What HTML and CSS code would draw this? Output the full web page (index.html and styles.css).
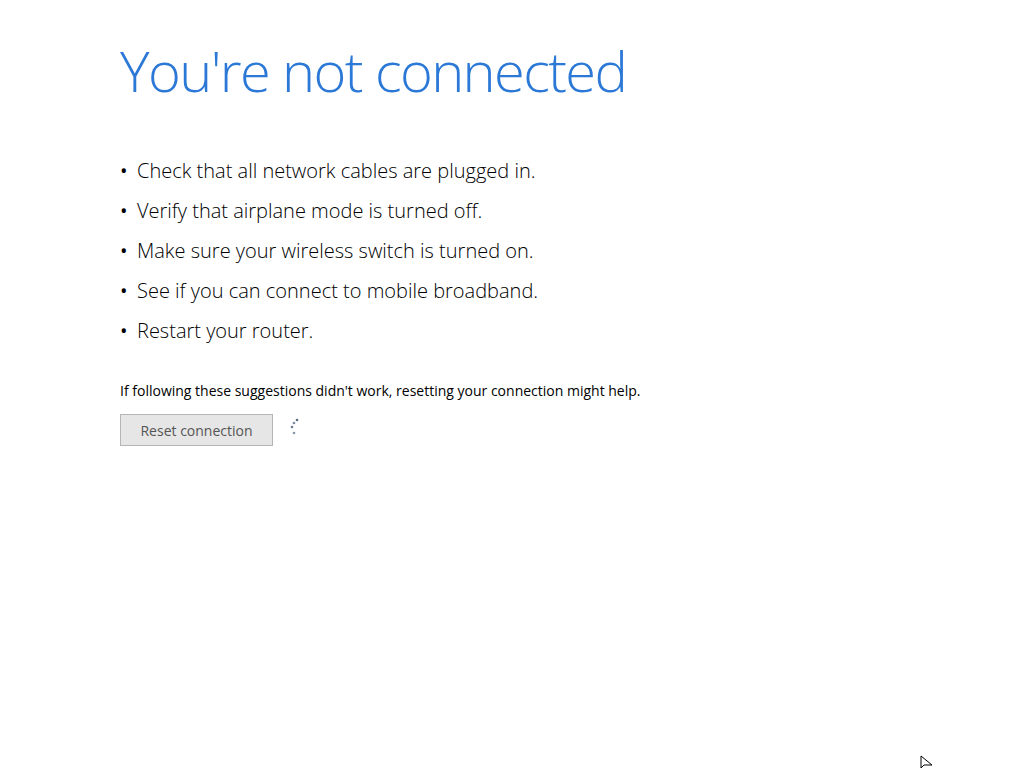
FILE: index.html
```html
<!DOCTYPE html>
<html lang="en">
<head>
  <meta charset="UTF-8">
  <title>You're not connected</title>
  <link rel="stylesheet" href="styles.css">
</head>
<body>

  <div class="page">
    <h1 class="title">You're not connected</h1>

    <ul class="tips">
      <li>Check that all network cables are plugged in.</li>
      <li>Verify that airplane mode is turned off.</li>
      <li>Make sure your wireless switch is turned on.</li>
      <li>See if you can connect to mobile broadband.</li>
      <li>Restart your router.</li>
    </ul>

    <p class="hint">If following these suggestions didn't work, resetting your connection might help.</p>

    <div class="actions">
      <button class="reset-btn">Reset connection</button>
      <svg class="spinner" width="16" height="20" viewBox="0 0 16 20">
        <circle cx="12" cy="3" r="1.3" fill="#5a6a80"/>
        <circle cx="9" cy="6" r="1.3" fill="#7a8aa0"/>
        <circle cx="7" cy="10" r="1.3" fill="#6a7a90"/>
        <circle cx="9" cy="16" r="1.3" fill="#8896aa"/>
      </svg>
    </div>
  </div>

  <svg class="cursor" width="14" height="16" viewBox="0 0 14 16">
    <path d="M1 1 L1 13 L4 10 L12 10 Z" fill="#fff" stroke="#000" stroke-width="1"/>
  </svg>

</body>
</html>
```

FILE: styles.css
```css
body {
  margin: 0;
  background: #fff;
  height: 100vh;
  overflow: hidden;
  font-family: "Open Sans", "Noto Sans", sans-serif;
  position: relative;
}

.page {
  padding: 37px 0 0 120px;
}

.title {
  margin: 0;
  font-size: 56px;
  font-weight: 300;
  color: #2b78d6;
  line-height: 66px;
  letter-spacing: -1.6px;
}

.tips {
  list-style: none;
  margin: 48px 0 0;
  padding: 0;
}

.tips li {
  font-size: 20px;
  font-weight: 300;
  color: #000;
  line-height: 40px;
  position: relative;
  padding-left: 17px;
}

.tips li::before {
  content: "•";
  position: absolute;
  left: 0;
  top: 0;
  font-weight: 400;
}

.hint {
  margin: 30px 0 0;
  font-size: 14px;
  color: #000;
  line-height: 20px;
}

.actions {
  margin-top: 13px;
  display: flex;
  align-items: flex-start;
  gap: 12px;
}

.reset-btn {
  width: 153px;
  height: 32px;
  background: #e6e6e6;
  border: 1px solid #b5b5b5;
  color: #555;
  font-family: inherit;
  font-size: 14px;
  padding: 0;
}

.spinner {
  margin-top: 3px;
}

.cursor {
  position: absolute;
  left: 920px;
  top: 755px;
}
```
